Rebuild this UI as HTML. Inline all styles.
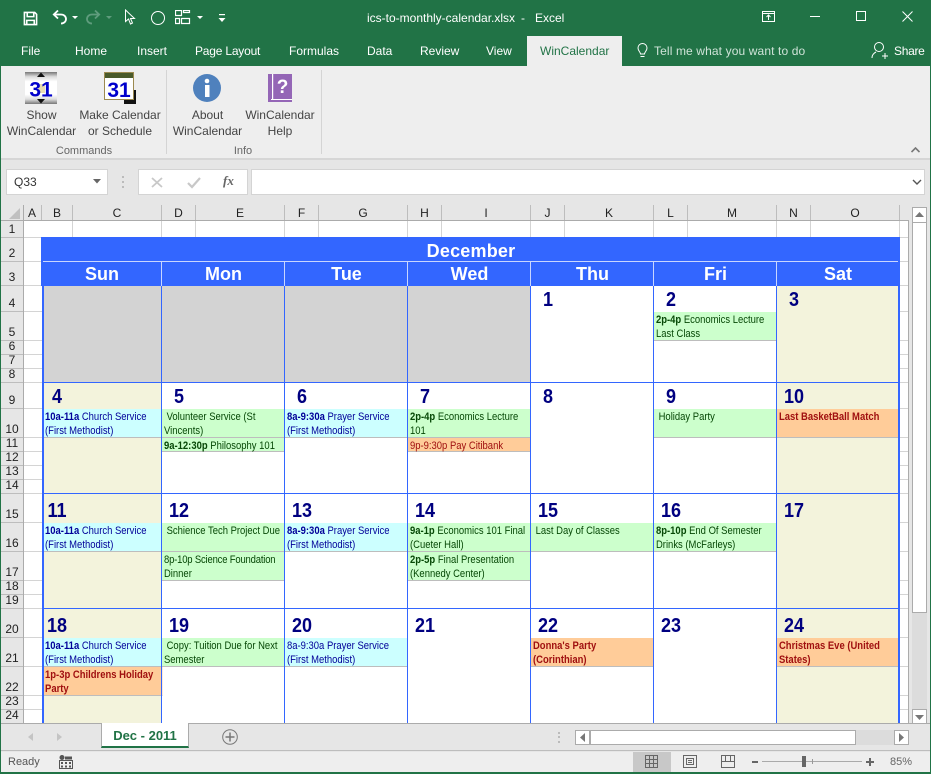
<!DOCTYPE html>
<html><head><meta charset="utf-8"><style>
*{box-sizing:border-box}
html,body{margin:0;padding:0}
body{width:931px;height:774px;position:relative;overflow:hidden;background:#e6e6e6;font-family:"Liberation Sans",sans-serif}
div,span.a,svg{position:absolute}
.t{white-space:nowrap;color:#fff;font-size:12px;line-height:16px}
.tab{top:43px;color:#fff;font-size:12px;line-height:16px;white-space:nowrap}
.rb{color:#444;font-size:12px;line-height:16px;text-align:center;white-space:nowrap}
.ch{top:205px;height:16px;border-right:1px solid #bdbdbd;font-size:12px;line-height:16px;text-align:center;color:#222}
.rh{left:1px;width:22px;border-bottom:1px solid #bdbdbd;font-size:12px;text-align:center;color:#222;background:#e6e6e6}
.rh span{position:absolute;left:0;right:0;bottom:0;line-height:15px}
.hl{left:24px;width:18px;height:1px;background:#d4d4d4}
.hr{left:900px;width:8px;height:1px;background:#d4d4d4}
.vb{width:1px;background:#3366ff;top:286px;height:437px}
.hb{left:42px;width:857px;height:1px;background:#3366ff}
.h{top:262px;height:24px;color:#fff;font-weight:bold;font-size:18px;line-height:24px;text-align:center}
.d{color:#000080;font-weight:bold;font-size:20px;line-height:22px;text-align:center;height:22px;width:34px;transform:scaleX(.9)}
.e{font-size:11px;line-height:14px;padding:1px 0 0 2.3px;border-bottom:1px solid #bdbdbd;white-space:nowrap;width:141.86px;transform:scaleX(.86);transform-origin:0 0}
.l{width:139.53px;padding-left:3.5px}
.s{padding-top:1px}
.c{background:#ccffff;color:#000099}
.g{background:#ccffcc;color:#064806}
.o{background:#ffcc99;color:#a01010}
.ob{font-weight:bold}
.w{background:#f3f3dc;width:119px}
.gr{background:#d3d3d3;height:96px;top:286px;width:122px}
</style></head><body>
<!-- title bar -->
<div style="left:0;top:0;width:931px;height:66px;background:#217346"></div>
<svg style="left:23px;top:11px" width="15" height="15" viewBox="0 0 16 16" fill="none" stroke="#fff" stroke-width="1.7"><path d="M1.5 1.5h11l2 2v11h-13z"/><path d="M4.5 2v4h7V2M4 14.500V10h8v4.500"/></svg>
<svg style="left:52px;top:9px" width="26" height="18" viewBox="0 0 26 18" fill="none" stroke="#fff" stroke-width="1.8"><path d="M6 1.500 1.800 5.500 6 9.500M2 5.500h7c3 0 5 2 5 4.500s-2 4.500-5 4.500"/><path d="M20 7h6l-3 3z" fill="#fff" stroke="none"/></svg>
<svg style="left:86px;top:9px" width="28" height="18" viewBox="0 0 28 18" fill="none" stroke="#5f9c7d" stroke-width="1.800"><path d="M9 1.500 13.200 5.500 9 9.500M13 5.500H6c-3 0-5 2-5 4.500s2 4.500 5 4.500"/><path d="M20 7h6l-3 3z" fill="#5f9c7d" stroke="none"/></svg>
<svg style="left:124px;top:9px" width="12" height="17" viewBox="0 0 12 17" fill="none" stroke="#fff" stroke-width="1"><path d="M1.500 1v11.500l3-2.500 2 5 2-1-2-4.500h4z"/></svg>
<div style="left:151px;top:11px;width:14px;height:14px;border:1.300px solid #fff;border-radius:50%"></div>
<svg style="left:175px;top:10px" width="28" height="15" viewBox="0 0 28 15" fill="none" stroke="#fff" stroke-width="1.200"><path d="M.5.500h6v5h-6zM8.500.500h6v2h-6zM.5 8.500h4v5h-4zM6.500 8.500h8v5h-8z"/><path d="M22 6h6l-3 3z" fill="#fff" stroke="none"/></svg>
<svg style="left:218px;top:13px" width="8" height="10" viewBox="0 0 8 10" fill="#fff"><rect x="1" y="1" width="6" height="1.200"/><path d="M.5 5h7L4 9z"/></svg>
<div class="t" style="left:367px;top:10px;font-size:12px;color:#fff;width:200px">ics-to-monthly-calendar.xlsx</div>
<div class="t" style="left:521px;top:10px;font-size:12px;color:#fff">-</div>
<div class="t" style="left:535px;top:10px;font-size:12px;color:#fff">Excel</div>
<svg style="left:762px;top:9px" width="14" height="14" viewBox="0 0 14 14" fill="none" stroke="#fff"><path d="M.5 2.500h12v10H.5zM.5 4.500h12"/><path d="M6.500 11V6.500M4.500 8l2-2 2 2"/></svg>
<div style="left:810px;top:16px;width:10px;height:1px;background:#fff"></div>
<div style="left:856px;top:11px;width:10px;height:10px;border:1px solid #fff"></div>
<svg style="left:902px;top:11px" width="11" height="11" viewBox="0 0 11 11" stroke="#fff"><path d="M.5.500l10 10M10.500.500l-10 10"/></svg>
<!-- tabs -->
<div class="tab" style="left:21px">File</div>
<div class="tab" style="left:75px">Home</div>
<div class="tab" style="left:137px">Insert</div>
<div class="tab" style="left:195px;letter-spacing:-.2px">Page Layout</div>
<div class="tab" style="left:289px">Formulas</div>
<div class="tab" style="left:367px">Data</div>
<div class="tab" style="left:420px">Review</div>
<div class="tab" style="left:486px">View</div>
<div style="left:527px;top:36px;width:95px;height:30px;background:#eeeeee"></div>
<div class="tab" style="left:540px;color:#217346">WinCalendar</div>
<svg style="left:636px;top:43px" width="13" height="16" viewBox="0 0 13 16" fill="none" stroke="#fff"><path d="M4.500 11c0-2-2.500-3-2.500-6a4.500 4.500 0 0 1 9 0c0 3-2.500 4-2.500 6zM4.500 13.500h4"/></svg>
<div class="tab" style="left:654px;color:#cfe3d8;letter-spacing:.12px">Tell me what you want to do</div>
<svg style="left:871px;top:41px" width="17" height="18" viewBox="0 0 17 18" fill="none" stroke="#fff"><circle cx="8" cy="6" r="4.500"/><path d="M1 17c0-3 2-5 4-6M11 15h6M14 12v6"/></svg>
<div class="tab" style="left:894px;letter-spacing:-.3px">Share</div>
<!-- ribbon -->
<div style="left:0;top:66px;width:931px;height:94px;background:#eeeeee;border-left:1px solid #217346;border-right:1px solid #217346;border-bottom:2px solid #d6d6d6"></div>
<svg style="left:25px;top:72px" width="32" height="32" viewBox="0 0 32 32"><defs><linearGradient id="a" x1="0" y1="0" x2="0" y2="1"><stop offset="0" stop-color="#777"/><stop offset=".15" stop-color="#ddd"/><stop offset=".3" stop-color="#fff"/><stop offset=".7" stop-color="#fff"/><stop offset=".85" stop-color="#ddd"/><stop offset="1" stop-color="#777"/></linearGradient></defs><rect width="32" height="32" fill="url(#a)"/><path d="M16 .5 20 5H12zM16 31.500 12 27h8z" fill="#111"/><rect x="13" y="12" width="7" height="9" fill="#e7dcae"/><text x="16" y="24.500" text-anchor="middle" font-family="Liberation Sans" font-weight="bold" font-size="21" fill="#0000cc">31</text></svg>
<svg style="left:104px;top:72px" width="32" height="32" viewBox="0 0 32 32"><rect x="20" y="18" width="12" height="14" fill="#111"/><rect x=".5" y=".5" width="29" height="27" fill="#fff" stroke="#9c8a50"/><rect x="1" y="1" width="28" height="5" fill="#4a5a2a"/><text x="15" y="25" text-anchor="middle" font-family="Liberation Sans" font-weight="bold" font-size="21" fill="#0000cc">31</text></svg>
<svg style="left:193px;top:74px" width="28" height="28" viewBox="0 0 28 28"><circle cx="14" cy="14" r="14" fill="#4f81bd"/><circle cx="14" cy="7" r="2.300" fill="#fff"/><rect x="12" y="11" width="4.500" height="12" fill="#fff"/></svg>
<svg style="left:268px;top:74px" width="24" height="28" viewBox="0 0 24 28"><rect width="24" height="28" fill="#9466b6"/><rect x="4" y="0" width="1.200" height="25" fill="#fff"/><rect x="3" y="25" width="21" height="1" fill="#fff"/><text x="14.500" y="19" text-anchor="middle" font-family="Liberation Sans" font-weight="bold" font-size="19" fill="#fff">?</text></svg>
<div class="rb" style="left:1px;top:107px;width:81px">Show<br>WinCalendar</div>
<div class="rb" style="left:76px;top:107px;width:88px">Make Calendar<br>or Schedule</div>
<div class="rb" style="left:167px;top:107px;width:81px">About<br>WinCalendar</div>
<div class="rb" style="left:241px;top:107px;width:78px">WinCalendar<br>Help</div>
<div class="rb" style="left:34px;top:143px;width:100px;font-size:11px;color:#666">Commands</div>
<div class="rb" style="left:193px;top:143px;width:100px;font-size:11px;color:#666">Info</div>
<div style="left:166px;top:70px;width:1px;height:84px;background:#d4d4d4"></div>
<div style="left:321px;top:70px;width:1px;height:84px;background:#d4d4d4"></div>
<svg style="left:911px;top:147px" width="9" height="6" viewBox="0 0 9 6" fill="none" stroke="#777" stroke-width="1.600"><path d="M.5 5 4.500 1l4 4"/></svg>
<!-- formula bar -->
<div style="left:6px;top:169px;width:102px;height:26px;background:#fff;border:1px solid #d4d4d4;font-size:12px;line-height:24px;padding-left:7px;color:#333">Q33</div>
<svg style="left:93px;top:179px" width="8" height="5"><path d="M0 0h8L4 4.500z" fill="#666"/></svg>
<div style="left:122px;top:176px;width:2px;height:2px;background:#bbb"></div><div style="left:122px;top:181px;width:2px;height:2px;background:#bbb"></div><div style="left:122px;top:186px;width:2px;height:2px;background:#bbb"></div>
<div style="left:138px;top:169px;width:110px;height:26px;background:#fff;border:1px solid #d4d4d4"></div>
<svg style="left:151px;top:177px" width="12" height="11" stroke="#c8c8c8" stroke-width="1.800"><path d="M1 1l10 9M11 1 1 10"/></svg>
<svg style="left:187px;top:177px" width="14" height="12" fill="none" stroke="#c8c8c8" stroke-width="2.200"><path d="M1 6l4 4 8-9"/></svg>
<div style="left:223px;top:173px;font:italic bold 13px 'Liberation Serif',serif;color:#666;line-height:16px;white-space:nowrap">fx</div>
<div style="left:251px;top:169px;width:674px;height:26px;background:#fff;border:1px solid #d4d4d4"></div>
<svg style="left:912px;top:179px" width="10" height="6" fill="none" stroke="#555" stroke-width="1.400"><path d="M1 1l4 4 4-4"/></svg>
<!-- grid background -->
<div style="left:1px;top:205px;width:908px;height:519px;background:#e6e6e6"></div>
<div style="left:24px;top:221px;width:884px;height:502px;background:#fff"></div>
<svg style="left:8px;top:208px" width="13" height="12"><path d="M12 0v11H1z" fill="#c0c0c0"/></svg>
<div class="ch" style="left:23px;width:19px">A</div>
<div class="ch" style="left:42px;width:31px">B</div>
<div class="ch" style="left:73px;width:89px">C</div>
<div class="ch" style="left:162px;width:34px">D</div>
<div class="ch" style="left:196px;width:89px">E</div>
<div class="ch" style="left:285px;width:34px">F</div>
<div class="ch" style="left:319px;width:89px">G</div>
<div class="ch" style="left:408px;width:34px">H</div>
<div class="ch" style="left:442px;width:89px">I</div>
<div class="ch" style="left:531px;width:34px">J</div>
<div class="ch" style="left:565px;width:89px">K</div>
<div class="ch" style="left:654px;width:34px">L</div>
<div class="ch" style="left:688px;width:89px">M</div>
<div class="ch" style="left:777px;width:34px">N</div>
<div class="ch" style="left:811px;width:89px">O</div>
<div style="left:1px;top:220px;width:908px;height:1px;background:#ababab"></div>
<div style="left:908px;top:220px;width:1px;height:504px;background:#ababab"></div>
<div style="left:23px;top:205px;width:1px;height:518px;background:#ababab"></div>
<div class="rh" style="top:221px;height:17px"><span>1</span></div>
<div class="rh" style="top:238px;height:24px"><span>2</span></div>
<div class="rh" style="top:262px;height:24px"><span>3</span></div>
<div class="rh" style="top:286px;height:26px"><span>4</span></div>
<div class="rh" style="top:312px;height:29px"><span>5</span></div>
<div class="rh" style="top:341px;height:14px"><span>6</span></div>
<div class="rh" style="top:355px;height:14px"><span>7</span></div>
<div class="rh" style="top:369px;height:14px"><span>8</span></div>
<div class="rh" style="top:383px;height:26px"><span>9</span></div>
<div class="rh" style="top:409px;height:29px"><span>10</span></div>
<div class="rh" style="top:438px;height:14px"><span>11</span></div>
<div class="rh" style="top:452px;height:14px"><span>12</span></div>
<div class="rh" style="top:466px;height:14px"><span>13</span></div>
<div class="rh" style="top:480px;height:14px"><span>14</span></div>
<div class="rh" style="top:494px;height:29px"><span>15</span></div>
<div class="rh" style="top:523px;height:29px"><span>16</span></div>
<div class="rh" style="top:552px;height:29px"><span>17</span></div>
<div class="rh" style="top:581px;height:14px"><span>18</span></div>
<div class="rh" style="top:595px;height:14px"><span>19</span></div>
<div class="rh" style="top:609px;height:29px"><span>20</span></div>
<div class="rh" style="top:638px;height:29px"><span>21</span></div>
<div class="rh" style="top:667px;height:29px"><span>22</span></div>
<div class="rh" style="top:696px;height:14px"><span>23</span></div>
<div class="rh" style="top:710px;height:14px"><span>24</span></div>
<!-- empty grid lines -->
<div class="hl" style="top:237px"></div><div class="hl" style="top:261px"></div><div class="hl" style="top:285px"></div><div class="hl" style="top:311px"></div><div class="hl" style="top:340px"></div><div class="hl" style="top:354px"></div><div class="hl" style="top:368px"></div><div class="hl" style="top:382px"></div><div class="hl" style="top:408px"></div><div class="hl" style="top:437px"></div><div class="hl" style="top:451px"></div><div class="hl" style="top:465px"></div><div class="hl" style="top:479px"></div><div class="hl" style="top:493px"></div><div class="hl" style="top:522px"></div><div class="hl" style="top:551px"></div><div class="hl" style="top:580px"></div><div class="hl" style="top:594px"></div><div class="hl" style="top:608px"></div><div class="hl" style="top:637px"></div><div class="hl" style="top:666px"></div><div class="hl" style="top:695px"></div><div class="hl" style="top:709px"></div>
<div class="hr" style="top:237px"></div><div class="hr" style="top:261px"></div><div class="hr" style="top:285px"></div><div class="hr" style="top:311px"></div><div class="hr" style="top:340px"></div><div class="hr" style="top:354px"></div><div class="hr" style="top:368px"></div><div class="hr" style="top:382px"></div><div class="hr" style="top:408px"></div><div class="hr" style="top:437px"></div><div class="hr" style="top:451px"></div><div class="hr" style="top:465px"></div><div class="hr" style="top:479px"></div><div class="hr" style="top:493px"></div><div class="hr" style="top:522px"></div><div class="hr" style="top:551px"></div><div class="hr" style="top:580px"></div><div class="hr" style="top:594px"></div><div class="hr" style="top:608px"></div><div class="hr" style="top:637px"></div><div class="hr" style="top:666px"></div><div class="hr" style="top:695px"></div><div class="hr" style="top:709px"></div>
<div style="left:72px;top:221px;width:1px;height:17px;background:#d4d4d4"></div><div style="left:161px;top:221px;width:1px;height:17px;background:#d4d4d4"></div><div style="left:195px;top:221px;width:1px;height:17px;background:#d4d4d4"></div><div style="left:284px;top:221px;width:1px;height:17px;background:#d4d4d4"></div><div style="left:318px;top:221px;width:1px;height:17px;background:#d4d4d4"></div><div style="left:407px;top:221px;width:1px;height:17px;background:#d4d4d4"></div><div style="left:441px;top:221px;width:1px;height:17px;background:#d4d4d4"></div><div style="left:530px;top:221px;width:1px;height:17px;background:#d4d4d4"></div><div style="left:564px;top:221px;width:1px;height:17px;background:#d4d4d4"></div><div style="left:653px;top:221px;width:1px;height:17px;background:#d4d4d4"></div><div style="left:687px;top:221px;width:1px;height:17px;background:#d4d4d4"></div><div style="left:776px;top:221px;width:1px;height:17px;background:#d4d4d4"></div><div style="left:810px;top:221px;width:1px;height:17px;background:#d4d4d4"></div><div style="left:899px;top:221px;width:1px;height:17px;background:#d4d4d4"></div>
<!-- calendar header -->
<div style="left:41px;top:237px;width:859px;height:49px;background:#3366ff"></div>
<div style="left:43px;top:261px;width:855px;height:1px;background:#c9d6ff"></div>
<div style="left:161px;top:262px;width:1px;height:24px;background:#c9d6ff"></div><div style="left:284px;top:262px;width:1px;height:24px;background:#c9d6ff"></div><div style="left:407px;top:262px;width:1px;height:24px;background:#c9d6ff"></div><div style="left:530px;top:262px;width:1px;height:24px;background:#c9d6ff"></div><div style="left:653px;top:262px;width:1px;height:24px;background:#c9d6ff"></div><div style="left:776px;top:262px;width:1px;height:24px;background:#c9d6ff"></div>
<div class="h" style="left:42px;top:239px;width:858px;letter-spacing:.2px">December</div>
<div class="h" style="left:42px;width:120px">Sun</div><div class="h" style="left:162px;width:123px">Mon</div><div class="h" style="left:285px;width:123px">Tue</div><div class="h" style="left:408px;width:123px">Wed</div><div class="h" style="left:531px;width:123px">Thu</div><div class="h" style="left:654px;width:123px">Fri</div><div class="h" style="left:777px;width:122px">Sat</div>
<!-- cell backgrounds -->
<div class="gr" style="left:42px;width:120px"></div><div class="gr" style="left:162px"></div><div class="gr" style="left:285px"></div><div class="gr" style="left:408px"></div>
<div class="w" style="left:777px;top:286px;height:96px;width:122px"></div>
<div class="w" style="left:42px;top:383px;height:110px;width:120px"></div><div class="w" style="left:777px;top:383px;height:110px;width:122px"></div>
<div class="w" style="left:42px;top:494px;height:114px;width:120px"></div><div class="w" style="left:777px;top:494px;height:114px;width:122px"></div>
<div class="w" style="left:42px;top:609px;height:114px;width:120px"></div><div class="w" style="left:777px;top:609px;height:114px;width:122px"></div>
<!-- day numbers -->
<div class="d" style="left:530.5px;top:289px">1</div><div class="d" style="left:654px;top:289px">2</div><div class="d" style="left:776.5px;top:289px">3</div>
<div class="d" style="left:40px;top:386px">4</div><div class="d" style="left:162px;top:386px">5</div><div class="d" style="left:285px;top:386px">6</div><div class="d" style="left:408px;top:386px">7</div><div class="d" style="left:530.5px;top:386px">8</div><div class="d" style="left:654px;top:386px">9</div><div class="d" style="left:776.5px;top:386px">10</div>
<div class="d" style="left:40px;top:500px">11</div><div class="d" style="left:162px;top:500px">12</div><div class="d" style="left:285px;top:500px">13</div><div class="d" style="left:408px;top:500px">14</div><div class="d" style="left:530.5px;top:500px">15</div><div class="d" style="left:654px;top:500px">16</div><div class="d" style="left:776.5px;top:500px">17</div>
<div class="d" style="left:40px;top:615px">18</div><div class="d" style="left:162px;top:615px">19</div><div class="d" style="left:285px;top:615px">20</div><div class="d" style="left:408px;top:615px">21</div><div class="d" style="left:530.5px;top:615px">22</div><div class="d" style="left:654px;top:615px">23</div><div class="d" style="left:776.5px;top:615px">24</div>
<!-- events -->
<div class="e g" style="left:654px;top:312px;height:29px"><b>2p-4p</b> Economics Lecture<br>Last Class</div>
<div class="e c l" style="left:42px;top:409px;height:29px"><b>10a-11a</b> Church Service<br>(First Methodist)</div>
<div class="e g" style="left:162px;top:409px;height:29px">&nbsp;Volunteer Service (St<br>Vincents)</div>
<div class="e g s" style="left:162px;top:438px;height:14px"><b>9a-12:30p</b> Philosophy 101</div>
<div class="e c" style="left:285px;top:409px;height:29px"><b>8a-9:30a</b> Prayer Service<br>(First Methodist)</div>
<div class="e g" style="left:408px;top:409px;height:29px"><b>2p-4p</b> Economics Lecture<br>101</div>
<div class="e o s" style="left:408px;top:438px;height:14px">9p-9:30p Pay Citibank</div>
<div class="e g" style="left:654px;top:409px;height:29px">&nbsp;Holiday Party</div>
<div class="e o ob" style="left:777px;top:409px;height:29px">Last BasketBall Match</div>
<div class="e c l" style="left:42px;top:523px;height:29px"><b>10a-11a</b> Church Service<br>(First Methodist)</div>
<div class="e g" style="left:162px;top:523px;height:29px">&nbsp;Schience Tech Project Due</div>
<div class="e g" style="left:162px;top:552px;height:29px"><span style="letter-spacing:-.2px">8p-10p Science Foundation</span><br>Dinner</div>
<div class="e c" style="left:285px;top:523px;height:29px"><b>8a-9:30a</b> Prayer Service<br>(First Methodist)</div>
<div class="e g" style="left:408px;top:523px;height:29px"><b>9a-1p</b> Economics 101 Final<br>(Cueter Hall)</div>
<div class="e g" style="left:408px;top:552px;height:29px"><b>2p-5p</b> Final Presentation<br>(Kennedy Center)</div>
<div class="e g" style="left:531px;top:523px;height:29px">&nbsp;Last Day of Classes</div>
<div class="e g" style="left:654px;top:523px;height:29px"><b>8p-10p</b> End Of Semester<br>Drinks (McFarleys)</div>
<div class="e c l" style="left:42px;top:638px;height:29px"><b>10a-11a</b> Church Service<br>(First Methodist)</div>
<div class="e o ob l" style="left:42px;top:667px;height:29px">1p-3p Childrens Holiday<br>Party</div>
<div class="e g" style="left:162px;top:638px;height:29px">&nbsp;Copy: Tuition Due for Next<br>Semester</div>
<div class="e c" style="left:285px;top:638px;height:29px">8a-9:30a Prayer Service<br>(First Methodist)</div>
<div class="e o ob" style="left:531px;top:638px;height:29px">Donna's Party<br>(Corinthian)</div>
<div class="e o ob" style="left:777px;top:638px;height:29px">Christmas Eve (United<br>States)</div>
<!-- blue lines -->
<div class="vb" style="left:42px;width:2px"></div><div class="vb" style="left:161px"></div><div class="vb" style="left:284px"></div><div class="vb" style="left:407px"></div><div class="vb" style="left:530px"></div><div class="vb" style="left:653px"></div><div class="vb" style="left:776px"></div><div class="vb" style="left:898px;width:2px"></div>
<div class="hb" style="top:382px"></div><div class="hb" style="top:493px"></div><div class="hb" style="top:608px"></div>
<!-- vertical scrollbar -->
<div style="left:909px;top:205px;width:21px;height:519px;background:#e6e6e6"></div>
<div style="left:912px;top:222px;width:15px;height:391px;background:#fff;border:1px solid #ababab"></div>
<div style="left:912px;top:613px;width:15px;height:96px;background:#dcdcdc"></div>
<div style="left:912px;top:207px;width:15px;height:16px;background:#fff;border:1px solid #ababab"></div>
<svg style="left:915px;top:212px" width="9" height="5"><path d="M4.500 0 9 5H0z" fill="#777"/></svg>
<div style="left:912px;top:709px;width:15px;height:15px;background:#fff;border:1px solid #ababab"></div>
<svg style="left:915px;top:715px" width="9" height="5"><path d="M0 0h9L4.500 5z" fill="#777"/></svg>
<!-- tab bar -->
<div style="left:1px;top:723px;width:929px;height:1px;background:#ababab"></div>
<div style="left:1px;top:724px;width:929px;height:27px;background:#e6e6e6;border-bottom:1px solid #bdbdbd"></div>
<svg style="left:28px;top:733px" width="6" height="9"><path d="M5 0v8L0 4z" fill="#c4c4c4"/></svg>
<svg style="left:57px;top:733px" width="6" height="9"><path d="M0 0v8l5-4z" fill="#c4c4c4"/></svg>
<div style="left:101px;top:723px;width:88px;height:25px;background:#fff;border-left:1px solid #ababab;border-right:1px solid #ababab;border-bottom:2px solid #217346;color:#217346;font-weight:bold;font-size:13px;line-height:25px;text-align:center">Dec - 2011</div>
<svg style="left:222px;top:729px" width="16" height="16" fill="none" stroke="#777"><circle cx="8" cy="8" r="7.300"/><path d="M8 3.500v9M3.500 8h9" stroke-width="1.500"/></svg>
<div style="left:558px;top:732px;width:2px;height:2px;background:#bbb"></div><div style="left:558px;top:736px;width:2px;height:2px;background:#bbb"></div><div style="left:558px;top:741px;width:2px;height:2px;background:#bbb"></div>
<div style="left:575px;top:730px;width:15px;height:15px;background:#fff;border:1px solid #ababab"></div>
<svg style="left:580px;top:733px" width="6" height="9"><path d="M5 0v9L0 4.500z" fill="#777"/></svg>
<div style="left:590px;top:730px;width:266px;height:15px;background:#fff;border:1px solid #ababab"></div>
<div style="left:856px;top:730px;width:38px;height:15px;background:#dcdcdc"></div>
<div style="left:894px;top:730px;width:15px;height:15px;background:#fff;border:1px solid #ababab"></div>
<svg style="left:899px;top:733px" width="6" height="9"><path d="M0 0v9l5-4.500z" fill="#777"/></svg>
<!-- status bar -->
<div style="left:0;top:752px;width:931px;height:20px;background:#eeeeee"></div>
<div style="left:8px;top:754px;font-size:11px;line-height:16px;color:#555">Ready</div>
<svg style="left:59px;top:755px" width="14" height="14" fill="#555"><circle cx="3" cy="2.500" r="2.500"/><path d="M.5 5.500h13v8H.5z" fill="none" stroke="#555"/><path d="M2 7h2v2H2zM6 7h2v2H6zM10 7h2v2h-2zM2 10.500h2v2H2zM6 10.500h2v2H6zM10 10.500h2v2h-2zM6 1.500h7v3H6z"/></svg>
<div style="left:633px;top:752px;width:38px;height:20px;background:#c8c8c8"></div>
<svg style="left:645px;top:755px" width="13" height="13" fill="none" stroke="#666"><path d="M.5.500h12v12H.5zM.5 4.500h12M.5 8.500h12M4.500.500v12M8.500.500v12"/></svg>
<svg style="left:683px;top:755px" width="14" height="13" fill="none" stroke="#666"><path d="M.5.500h13v12H.5zM3.500 3.500h7v6h-7zM5 5.500h4M5 7.500h4"/></svg>
<svg style="left:721px;top:755px" width="14" height="13" fill="none" stroke="#666"><path d="M.5.500h13v12H.5zM4.500.500v6h5v-6M.5 6.500h13"/></svg>
<div style="left:752px;top:761px;width:6px;height:2px;background:#666"></div>
<div style="left:762px;top:761px;width:100px;height:1px;background:#aaa"></div>
<div style="left:812px;top:759px;width:1px;height:5px;background:#999"></div>
<div style="left:802px;top:756px;width:4px;height:11px;background:#666"></div>
<svg style="left:866px;top:758px" width="8" height="8" fill="#666"><path d="M3 0h2v3h3v2H5v3H3V5H0V3h3z"/></svg>
<div style="left:890px;top:754px;font-size:11px;line-height:16px;color:#666">85%</div>
<!-- window edges -->
<div style="left:0;top:772px;width:931px;height:2px;background:#217346"></div>
<div style="left:0;top:66px;width:1px;height:708px;background:#217346"></div>
<div style="left:930px;top:66px;width:1px;height:708px;background:#217346"></div>
</body></html>
